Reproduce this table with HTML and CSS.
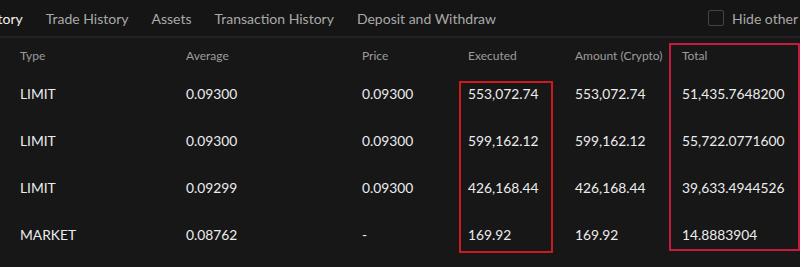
FILE: index.html
```html
<!DOCTYPE html>
<html>
<head>
<meta charset="utf-8">
<link rel="stylesheet" href="styles.css">
</head>
<body>
<div class="panel">
  <div class="tabs">
    <div class="tab-list">
      <span class="tab active first">Order History</span>
      <span class="tab">Trade History</span>
      <span class="tab">Assets</span>
      <span class="tab">Transaction History</span>
      <span class="tab">Deposit and Withdraw</span>
    </div>
    <label class="hide">
      <span class="box"></span>
      <span>Hide other</span>
    </label>
  </div>
  <div class="table">
    <div class="row head">
      <span>Type</span><span>Average</span><span>Price</span><span>Executed</span><span>Amount (Crypto)</span><span>Total</span>
    </div>
    <div class="row">
      <span>LIMIT</span><span>0.09300</span><span>0.09300</span><span>553,072.74</span><span>553,072.74</span><span>51,435.7648200</span>
    </div>
    <div class="row">
      <span>LIMIT</span><span>0.09300</span><span>0.09300</span><span>599,162.12</span><span>599,162.12</span><span>55,722.0771600</span>
    </div>
    <div class="row">
      <span>LIMIT</span><span>0.09299</span><span>0.09300</span><span>426,168.44</span><span>426,168.44</span><span>39,633.4944526</span>
    </div>
    <div class="row">
      <span>MARKET</span><span>0.08762</span><span>-</span><span>169.92</span><span>169.92</span><span>14.8883904</span>
    </div>
    <div class="mark mark-exec"></div>
    <div class="mark mark-total"></div>
  </div>
</div>
</body>
</html>
```
FILE: styles.css
```css
* { box-sizing: border-box; }
html, body {
  margin: 0;
  padding: 0;
  background: #171717;
  overflow: hidden;
}
.panel {
  width: 800px;
  height: 267px;
  background: #171717;
  font-family: "Lato", "Noto Sans", sans-serif;
  color: #e6e6e6;
  position: relative;
  overflow: hidden;
}
.tabs {
  height: 38px;
  display: flex;
  align-items: center;
  justify-content: space-between;
  border-bottom: 2px solid #222222;
  background: #151515;
}
.tab-list {
  display: flex;
  align-items: center;
  gap: 23px;
  white-space: nowrap;
}
.tab {
  font-size: 14px;
  color: #a9a9a9;
}
.tab.active { color: #f2f2f2; }
.tab.first { margin-left: -62px; }
.hide {
  display: flex;
  align-items: center;
  gap: 8px;
  font-size: 14px;
  color: #a9a9a9;
  white-space: nowrap;
  margin-right: 2px;
}
.box {
  width: 16px;
  height: 16px;
  border: 1.5px solid #444;
  border-radius: 2px;
}
.table {
  position: relative;
}
.row {
  display: grid;
  grid-template-columns: 166px 176px 106px 107px 107px 1fr;
  padding-left: 20px;
  height: 47px;
  align-items: center;
  font-size: 13.8px;
  color: #ececec;
  white-space: nowrap;
}
.row.head {
  height: 34px;
  font-size: 12px;
  color: #9c9c9c;
  margin-bottom: -2px;
}
.mark {
  position: absolute;
  border: 2.5px solid #cc1a1f;
}
.mark-exec {
  left: 459px;
  top: 43px;
  width: 94px;
  height: 172px;
}
.mark-total {
  left: 669px;
  top: 5px;
  width: 131px;
  height: 208px;
  border-color: #c81a3e;
}
```
